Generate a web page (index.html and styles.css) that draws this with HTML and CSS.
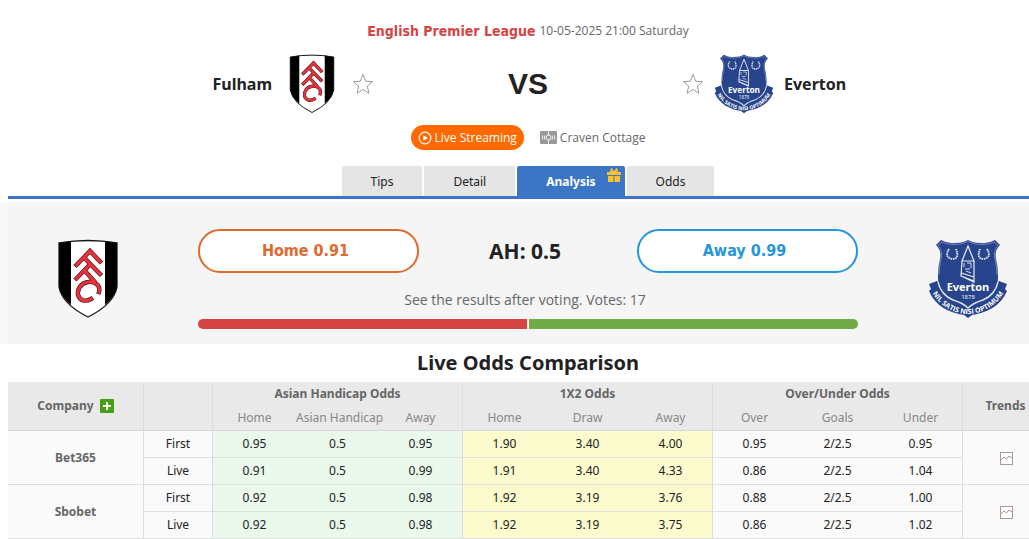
FILE: index.html
```html
<!DOCTYPE html>
<html lang="en">
<head>
  <meta charset="UTF-8">
  <meta name="viewport" content="width=device-width, initial-scale=1.0">
  <title>Fulham vs Everton - Analysis</title>
  <link rel="stylesheet" href="styles.css">
</head>
<body>
  <!-- Shared icons -->
  <svg class="sprite" aria-hidden="true">
    <symbol id="fulham" viewBox="0 0 80 80">
      <path d="M11 4Q40 -1 69 4V48Q66 65 40 78Q14 65 11 48Z" fill="#fff"/>
      <path d="M11 4L23 2V66Q13 58 11 48ZM69 4L57 2V66Q67 58 69 48Z" fill="#000"/>
      <path d="M11 4Q40 -1 69 4V48Q66 65 40 78Q14 65 11 48Z" fill="none" stroke="#111" stroke-width="1.3"/>
      <g fill="none" stroke-linecap="square" stroke-linejoin="miter">
        <path d="M28.500 26L42 12L52 22.500M36 18.500L52 35M28.500 39.500L41.500 26M37 32L46 42M51 53C53 46 46 42 40 43C33 44 29 50 30 56C32 62 38 63 43 60" stroke="#401418" stroke-width="4.400"/>
        <path d="M28.500 26L42 12L52 22.500M36 18.500L52 35M28.500 39.500L41.500 26M37 32L46 42M51 53C53 46 46 42 40 43C33 44 29 50 30 56C32 62 38 63 43 60" stroke="#e8323c" stroke-width="3.200"/>
      </g>
    </symbol>
    <symbol id="star" viewBox="0 0 22 22">
      <path d="M11 1.5L13.7 8.2L20.5 8.7L15.3 13.2L17 20.3L11 16.5L5 20.3L6.7 13.2L1.5 8.7L8.3 8.2Z" fill="#fff" stroke="#999"/>
    </symbol>
    <symbol id="trend" viewBox="0 0 14 14">
      <rect x="1.5" y="1.5" width="12" height="12" fill="#fff" stroke="#a99a92"/>
      <path d="M2 9L5 6L7.5 8L10 5L13 7" fill="none" stroke="#a98f86"/>
    </symbol>
  </svg>

  <div class="page">
    <header class="match">
      <div class="match-info">
        <a class="league" href="#">English Premier League</a>
        <span class="kickoff">10-05-2025 21:00 Saturday</span>
      </div>
      <div class="teams">
        <div class="team team-home">
          <a href="#">Fulham</a>
          <svg class="crest"><use href="#fulham"/></svg>
          <button class="star" aria-label="Follow Fulham"><svg><use href="#star"/></svg></button>
        </div>
        <div class="vs">VS</div>
        <div class="team team-away">
          <button class="star" aria-label="Follow Everton"><svg><use href="#star"/></svg></button>
          <svg class="crest" viewBox="0 0 80 80">
            <g id="everton">
              <path d="M1 45L9 42L14 48Q21 61 40 66Q59 61 66 48L71 42L79 45L77 50L79 52C73 67 58 74 44 76L40 79L36 76C22 74 7 67 1 52L3 50Z" fill="#27448c"/>
              <path d="M13 1Q20 5 27 4Q35 4 40 1Q45 4 53 4Q60 5 67 1L72 6Q66 12 68 20Q70 28 70 36Q71 53 55 62Q46 65 40 70Q34 65 25 62Q9 53 10 36Q10 28 12 20Q14 12 8 6Z" fill="#27448c"/>
              <path d="M10 43Q13 56 25 61Q35 64 40 69Q45 64 55 61Q67 56 70 43" fill="none" stroke="#dfe5f2" stroke-width="1.4"/>
              <path d="M14 3Q20 6 27 5.500Q35 5 40 2.500Q45 5 53 5.500Q60 6 66 3L70 6.500Q65 12 67 20Q69 28 69 36M14 3L10 6.500Q15 12 13 20Q11 28 11 36" fill="none" stroke="#8fa0cb" stroke-width="0.7"/>
              <g fill="none" stroke="#e8edf6">
                <path d="M40 7L34 22H46ZM34 22L33 37L46 43V22M33 37L46 42M33 34L46 38" stroke-width="1.2"/>
                <path d="M36 24V28M39 24H43M43 24V29M37 30H42M38 32L43 34" stroke-width="0.9"/>
                <path d="M21 10Q16 18 24 20Q32 20 28 10M59 10Q64 18 56 20Q48 20 52 10" stroke-width="1.8" stroke-dasharray="1.6 0.7"/>
              </g>
              <text x="40" y="52" class="crest-name">Everton</text>
              <text x="40" y="60" class="crest-year">1878</text>
              <path id="motto" d="M3 52C12 68 27 75 40 75C53 75 68 68 77 52" fill="none"/>
              <text class="crest-motto"><textPath href="#motto" startOffset="50%">NIL SATIS NISI OPTIMUM</textPath></text>
            </g>
          </svg>
          <a href="#">Everton</a>
        </div>
      </div>
      <div class="venue-row">
        <button class="live-btn">
          <svg viewBox="0 0 14 14"><circle cx="7" cy="7" r="5.8" fill="none" stroke="#fff" stroke-width="1.2"/><path d="M5.2 4.2V9.8L10 7Z" fill="#fff"/></svg>
          Live Streaming
        </button>
        <span class="venue">
          <svg viewBox="0 0 17 13"><rect width="17" height="13" rx="1" fill="#999"/><g fill="none" stroke="#fff"><circle cx="8.5" cy="6.5" r="2.5"/><path d="M8.5 0V4M8.5 9V13M2.5 4.5V8.5M4.5 4.5V8.5M12.5 4.5V8.5M14.5 4.5V8.5" stroke-width="0.8"/></g></svg>
          Craven Cottage
        </span>
      </div>
    </header>

    <nav class="tabs">
      <a href="#">Tips</a>
      <a href="#">Detail</a>
      <a href="#" class="active">Analysis
        <svg class="gift" viewBox="0 0 14 14"><path d="M0 4H14V7H0ZM1 8H6.5V14H1ZM7.5 8H13V14H7.5Z" fill="#ffc12e"/><path d="M7 4L3.5 3L4.5 0.8L7 4L9.5 0.8L10.5 3Z" fill="none" stroke="#ffc12e" stroke-width="1.2"/></svg>
      </a>
      <a href="#">Odds</a>
    </nav>

    <section class="vote">
      <svg class="vote-crest"><use href="#fulham"/></svg>
      <div class="vote-body">
        <div class="vote-row">
          <button class="vote-btn home">Home 0.91</button>
          <span class="handicap">AH: 0.5</span>
          <button class="vote-btn away">Away 0.99</button>
        </div>
        <p class="vote-note">See the results after voting. Votes: 17</p>
        <div class="vote-bar"><span class="bar-home"></span><span class="bar-away"></span></div>
      </div>
      <svg class="vote-crest" viewBox="0 0 80 80"><use href="#everton"/></svg>
    </section>

    <h2>Live Odds Comparison</h2>
    <table class="odds">
      <colgroup>
        <col class="col-company"><col class="col-type">
        <col class="col-lead"><col span="2" class="col-odd">
        <col class="col-lead"><col span="2" class="col-odd">
        <col class="col-lead"><col span="2" class="col-odd">
        <col>
      </colgroup>
      <thead>
        <tr>
          <th rowspan="2"><span class="company">Company <button class="add-btn" aria-label="Add company"><svg viewBox="0 0 14 14"><path d="M7 3V11M3 7H11" stroke="#fff" stroke-width="2"/></svg></button></span></th>
          <th rowspan="2"></th>
          <th colspan="3">Asian Handicap Odds</th>
          <th colspan="3">1X2 Odds</th>
          <th colspan="3">Over/Under Odds</th>
          <th rowspan="2">Trends</th>
        </tr>
        <tr class="sub">
          <th class="first">Home</th><th>Asian Handicap</th><th>Away</th>
          <th class="first">Home</th><th>Draw</th><th>Away</th>
          <th class="first">Over</th><th>Goals</th><th>Under</th>
        </tr>
      </thead>
      <tbody>
        <tr>
          <th rowspan="2">Bet365</th>
          <td class="first">First</td>
          <td class="ah first">0.95</td><td class="ah">0.5</td><td class="ah">0.95</td>
          <td class="x2 first">1.90</td><td class="x2">3.40</td><td class="x2">4.00</td>
          <td class="first">0.95</td><td>2/2.5</td><td>0.95</td>
          <td class="first" rowspan="2"><a href="#" aria-label="Bet365 trends"><svg class="trend"><use href="#trend"/></svg></a></td>
        </tr>
        <tr>
          <td class="first">Live</td>
          <td class="ah first">0.91</td><td class="ah">0.5</td><td class="ah">0.99</td>
          <td class="x2 first">1.91</td><td class="x2">3.40</td><td class="x2">4.33</td>
          <td class="first">0.86</td><td>2/2.5</td><td>1.04</td>
        </tr>
        <tr>
          <th rowspan="2">Sbobet</th>
          <td class="first">First</td>
          <td class="ah first">0.92</td><td class="ah">0.5</td><td class="ah">0.98</td>
          <td class="x2 first">1.92</td><td class="x2">3.19</td><td class="x2">3.76</td>
          <td class="first">0.88</td><td>2/2.5</td><td>1.00</td>
          <td class="first" rowspan="2"><a href="#" aria-label="Sbobet trends"><svg class="trend"><use href="#trend"/></svg></a></td>
        </tr>
        <tr>
          <td class="first">Live</td>
          <td class="ah first">0.92</td><td class="ah">0.5</td><td class="ah">0.98</td>
          <td class="x2 first">1.92</td><td class="x2">3.19</td><td class="x2">3.75</td>
          <td class="first">0.86</td><td>2/2.5</td><td>1.02</td>
        </tr>
      </tbody>
    </table>
  </div>
</body>
</html>
```
FILE: styles.css
```css
* {
  box-sizing: border-box;
}

body {
  margin: 0;
  font-family: Tahoma, "Noto Sans", sans-serif;
  font-size: 12px;
  line-height: 16px;
  color: #222;
  background: #fff;
  overflow-x: hidden;
}

a {
  color: inherit;
  text-decoration: none;
}

button {
  font-family: inherit;
  padding: 0;
  border: none;
  background: none;
  cursor: pointer;
}

svg {
  display: block;
}

.sprite {
  position: absolute;
  width: 0;
  height: 0;
}

.page {
  min-width: 1040px;
  margin-left: 8px;
}

/* Match header */
.match {
  padding-top: 21px;
}

.match-info {
  display: flex;
  justify-content: center;
  align-items: center;
  gap: 4px;
  line-height: 20px;
}

.league {
  font-family: "DejaVu Sans Condensed", "DejaVu Sans", sans-serif;
  font-size: 14px;
  font-weight: bold;
  color: #d64444;
}

.kickoff,
.live-btn,
.venue,
.vote-note {
  font-family: Tahoma, "Open Sans", sans-serif;
}

.kickoff {
  color: #666;
}

.teams {
  display: flex;
  align-items: center;
  margin-top: 13px;
}

.team {
  flex: 1;
  display: flex;
  align-items: center;
  gap: 10px;
  font-size: 16px;
  font-weight: bold;
}

.team-home {
  justify-content: flex-end;
}

.crest {
  width: 60px;
  height: 60px;
}

.star,
.star svg {
  width: 22px;
  height: 22px;
}

.vs {
  width: 308px;
  text-align: center;
  font-family: Arial, "Liberation Sans", sans-serif;
  font-size: 30px;
  font-weight: bold;
}

.venue-row {
  display: flex;
  justify-content: center;
  align-items: center;
  gap: 16px;
  margin-top: 11px;
}

.live-btn,
.venue {
  display: flex;
  align-items: center;
  gap: 3px;
}

.live-btn {
  height: 25px;
  padding: 0 7px;
  border-radius: 13px;
  font-size: 12px;
  color: #fff;
  background: #ff6900;
}

.live-btn svg {
  width: 14px;
  height: 14px;
}

.venue {
  color: #666;
}

.venue svg {
  width: 17px;
  height: 13px;
}

/* Tabs */
.tabs {
  display: flex;
  justify-content: center;
  gap: 2px;
  margin-top: 16px;
  border-bottom: 3px solid #3b76c6;
}

.tabs a {
  position: relative;
  height: 30px;
  padding: 0 29px;
  line-height: 32px;
  border-radius: 2px 2px 0 0;
  background: #e5e5e5;
}

.tabs .active {
  font-weight: bold;
  color: #fff;
  background: #3b76c6;
}

.gift {
  position: absolute;
  top: 2px;
  right: 4px;
  width: 14px;
  height: 14px;
}

/* Vote panel */
.vote {
  display: flex;
  justify-content: space-between;
  align-items: center;
  margin-top: 3px;
  padding: 11px 40px 0;
  height: 142px;
  background: #f5f5f5;
  box-shadow: -8px 0 0 #f8f8f8;
}

.vote-crest {
  width: 80px;
  height: 80px;
}

.vote-body {
  width: 660px;
}

.vote-row {
  display: flex;
  justify-content: space-between;
  align-items: center;
}

.vote-btn {
  width: 221px;
  height: 44px;
  padding-right: 6px;
  border: 2px solid;
  border-radius: 22px;
  font-family: "DejaVu Sans Condensed", "DejaVu Sans", sans-serif;
  font-size: 16px;
  font-weight: bold;
  background: #fff;
}

.vote-btn.home {
  color: #e0692e;
}

.vote-btn.away {
  color: #2596dc;
}

.handicap {
  padding-right: 6px;
  font-size: 21px;
  font-weight: bold;
}

.vote-note {
  margin: 18px 0 10px;
  padding-right: 6px;
  text-align: center;
  font-size: 14px;
  line-height: 18px;
  color: #666;
}

.vote-bar {
  display: flex;
  gap: 2px;
  height: 10px;
  border-radius: 5px;
  overflow: hidden;
}

.vote-bar span {
  flex: 1;
}

.bar-home {
  background: #d64444;
}

.bar-away {
  background: #70ab48;
}

/* Odds table */
h2 {
  margin: 0;
  text-align: center;
  font-size: 20px;
  line-height: 38px;
}

.odds {
  width: 100%;
  table-layout: fixed;
  border-collapse: separate;
  border-spacing: 0;
  text-align: center;
}

.col-company {
  width: 135px;
}

.col-type {
  width: 69px;
}

.col-lead {
  width: 84px;
}

.col-odd {
  width: 83px;
}

.odds th,
.odds td {
  height: 27px;
  padding: 0;
  border-bottom: 1px solid #e0e0e0;
  background: #fafafa;
  white-space: nowrap;
}

.odds th {
  color: #666;
}

.odds thead th {
  height: 24px;
  border-bottom: 1px solid #d8d8d8;
  background: #e9e9e9;
}

.odds thead th[colspan] {
  border-bottom: none;
}

.odds thead th + th,
.odds .first {
  border-left: 1px solid #ddd;
}

.odds .sub th {
  height: 25px;
  font-weight: normal;
  color: #888;
}

.odds .sub th:not(.first) {
  border-left: none;
}

.odds .ah {
  background: #ebf8ec;
}

.odds .x2 {
  background: #fbfbce;
}

.company {
  display: flex;
  justify-content: center;
  align-items: center;
  gap: 6px;
}

.add-btn,
.add-btn svg {
  width: 14px;
  height: 14px;
}

.add-btn {
  border-radius: 1px;
  background: #46a012;
}

.trend {
  width: 14px;
  height: 14px;
  margin: 0 auto;
}

/* Lettering on the Everton crest */
.crest-name,
.crest-year,
.crest-motto {
  fill: #fff;
  text-anchor: middle;
  font-family: "Open Sans", sans-serif;
}

.crest-name {
  font-size: 11px;
  font-weight: bold;
}

.crest-year {
  font-size: 6px;
  font-weight: normal;
}

.crest-motto {
  font-size: 7px;
  font-weight: bold;
}
```
